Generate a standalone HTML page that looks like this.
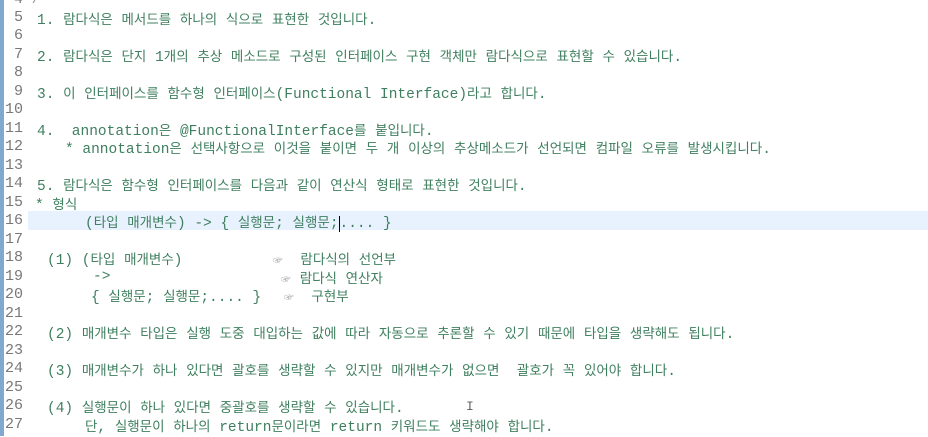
<!DOCTYPE html>
<html><head><meta charset="utf-8"><style>
body{margin:0;width:928px;height:436px;background:#fff;overflow:hidden;position:relative;font-family:"Liberation Mono","Noto Sans CJK KR",monospace;font-size:14.5px;color:#3f7f5f}
.bar{position:absolute;left:0;top:0;width:4px;height:436px;background:#7fa9cf}
.hl{position:absolute;left:28px;top:211px;width:900px;height:19px;background:#e8f2fe}
.n{position:absolute;left:4px;width:19px;text-align:right;color:#787878;line-height:18px;white-space:pre;font-size:15px}
.l{position:absolute;line-height:18px;white-space:pre}
.k{font-family:"Noto Sans CJK KR",sans-serif;font-size:13.5px;word-spacing:5.7px}
.p{font-size:10px;color:#999}
</style></head><body>
<div class="bar"></div><div class="hl"></div>
<div class="n" style="top:-9px">4</div><div class="l" style="left:23px;top:-9px;color:#999">*/</div>
<div class="n" style="top:9px">5</div>
<div class="n" style="top:27px">6</div>
<div class="n" style="top:46px">7</div>
<div class="n" style="top:64px">8</div>
<div class="n" style="top:83px">9</div>
<div class="n" style="top:101px">10</div>
<div class="n" style="top:120px">11</div>
<div class="n" style="top:138px">12</div>
<div class="n" style="top:157px">13</div>
<div class="n" style="top:175px">14</div>
<div class="n" style="top:194px">15</div>
<div class="n" style="top:212px">16</div>
<div class="n" style="top:231px">17</div>
<div class="n" style="top:249px">18</div>
<div class="n" style="top:268px">19</div>
<div class="n" style="top:286px">20</div>
<div class="n" style="top:305px">21</div>
<div class="n" style="top:323px">22</div>
<div class="n" style="top:342px">23</div>
<div class="n" style="top:360px">24</div>
<div class="n" style="top:379px">25</div>
<div class="n" style="top:397px">26</div>
<div class="n" style="top:416px">27</div>

<div class="l" style="left:37px;top:9px">1. <span class="k">람다식은 메서드를 하나의 식으로 표현한 것입니다</span>.</div>
<div class="l" style="left:37px;top:46px">2. <span class="k">람다식은 단지 </span>1<span class="k">개의 추상 메소드로 구성된 인터페이스 구현 객체만 람다식으로 표현할 수 있습니다</span>.</div>
<div class="l" style="left:37px;top:83px">3. <span class="k">이 인터페이스를 함수형 인터페이스</span>(Functional Interface)<span class="k">라고 합니다</span>.</div>
<div class="l" style="left:37px;top:120px">4.  annotation<span class="k">은 </span>@FunctionalInterface<span class="k">를 붙입니다</span>.</div>
<div class="l" style="left:65px;top:138px">* annotation<span class="k">은 선택사항으로 이것을 붙이면 두 개 이상의 추상메소드가 선언되면 컴파일 오류를 발생시킵니다</span>.</div>
<div class="l" style="left:37px;top:175px">5. <span class="k">람다식은 함수형 인터페이스를 다음과 같이 연산식 형태로 표현한 것입니다</span>.</div>
<div class="l" style="left:35px;top:194px">* <span class="k">형식</span></div>
<div class="l" style="left:85px;top:212px">(<span class="k">타입 매개변수</span>) -&gt; { <span class="k">실행문</span>; <span class="k">실행문</span>;<span style="border-left:1px solid #000"></span>.... }</div>
<div class="l" style="left:47px;top:249px">(1) (<span class="k">타입 매개변수</span>)</div>
<div class="l" style="left:273px;top:249px"><span class="p">☞</span>  <span class="k">람다식의 선언부</span></div>
<div class="l" style="left:93px;top:268px">-&gt;</div>
<div class="l" style="left:281px;top:268px"><span class="p">☞</span> <span class="k">람다식 연산자</span></div>
<div class="l" style="left:91px;top:286px">{ <span class="k">실행문</span>; <span class="k">실행문</span>;.... }</div>
<div class="l" style="left:284px;top:286px"><span class="p">☞</span>  <span class="k">구현부</span></div>
<div class="l" style="left:47px;top:323px">(2) <span class="k">매개변수 타입은 실행 도중 대입하는 값에 따라 자동으로 추론할 수 있기 때문에 타입을 생략해도 됩니다</span>.</div>
<div class="l" style="left:47px;top:360px">(3) <span class="k">매개변수가 하나 있다면 괄호를 생략할 수 있지만 매개변수가 없으면  괄호가 꼭 있어야 합니다</span>.</div>
<div class="l" style="left:47px;top:397px">(4) <span class="k">실행문이 하나 있다면 중괄호를 생략할 수 있습니다</span>.</div>
<div class="l" style="left:466px;top:398px;color:#666;font-size:13px">I</div>
<div class="l" style="left:85px;top:416px"><span class="k">단</span>, <span class="k">실행문이 하나의 </span>return<span class="k">문이라면 </span>return <span class="k">키워드도 생략해야 합니다</span>.</div>
</body></html>
